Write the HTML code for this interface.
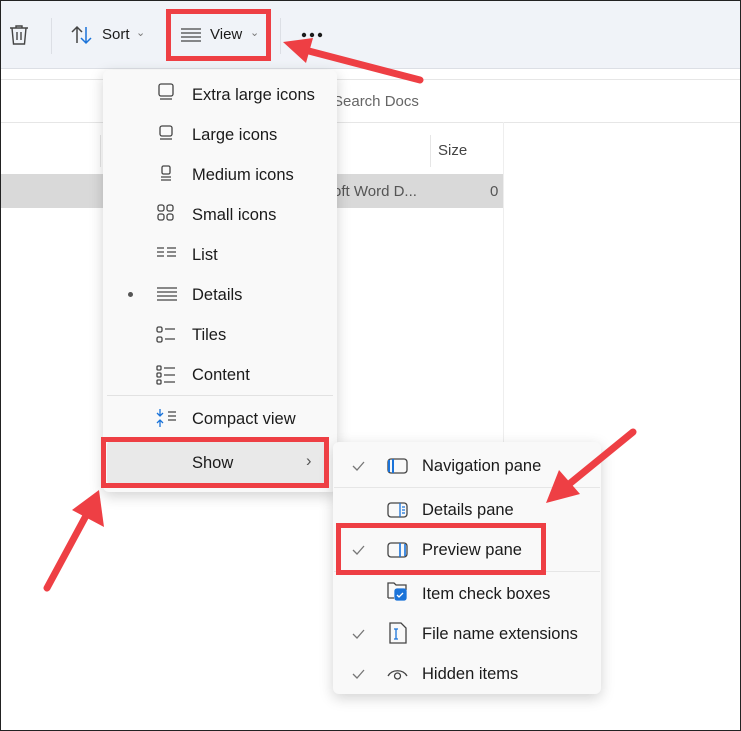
<!DOCTYPE html>
<html><head><style>
body{margin:0;width:741px;height:731px;overflow:hidden;font-family:"Liberation Sans",sans-serif;background:#fff;position:relative}
.abs{position:absolute}
.t{position:absolute;font-size:16.5px;color:#1b1b1b;white-space:nowrap}
</style></head><body>
<div class="abs" style="left:0;top:0;width:741px;height:68px;background:#f0f3f8;border-bottom:1px solid #dcdfe5"></div>
<div class="abs" style="left:0;top:79px;width:741px;height:1px;background:#e6e6e6"></div>
<div class="abs" style="left:0;top:122px;width:741px;height:1px;background:#e6e6e6"></div>
<div class="abs" style="left:51px;top:18px;width:1px;height:36px;background:#dcdfe5"></div>
<div class="abs" style="left:280px;top:18px;width:1px;height:36px;background:#dcdfe5"></div>
<svg class="abs" style="left:8px;top:24px" width="22" height="22" viewBox="0 0 22 22" fill="none" stroke="#444" stroke-width="1.4"><path d="M2 4h18M8 4V2h6v2M4 4l1.5 16h11L18 4M9 8v8M13 8v8"/></svg>
<svg class="abs" style="left:70px;top:25px" width="24" height="20" viewBox="0 0 24 20" fill="none" stroke-width="1.5"><path d="M7 18V2M2 7l5-5 5 5" stroke="#444"/><path d="M16 2v16M11 13l5 5 5-5" stroke="#1a73d9"/></svg>
<div class="t" style="left:102px;top:26px;font-size:15px">Sort</div>
<div class="t" style="left:136px;top:26px;font-size:11px;color:#777">⌄</div>
<svg class="abs" style="left:180px;top:28px" width="22" height="14" stroke="#444" stroke-width="1.2"><path d="M1 1h20M1 5h20M1 9h20M1 13h20"/></svg>
<div class="t" style="left:210px;top:26px;font-size:15px">View</div>
<div class="t" style="left:250px;top:26px;font-size:11px;color:#777">⌄</div>
<div class="t" style="left:333px;top:93px;font-size:15px;color:#666">Search Docs</div>
<div class="abs" style="left:430px;top:135px;width:1px;height:32px;background:#e6e6e6"></div>
<div class="abs" style="left:100px;top:135px;width:1px;height:32px;background:#e6e6e6"></div>
<div class="t" style="left:438px;top:142px;font-size:15px;color:#444">Size</div>
<div class="abs" style="left:0;top:174px;width:503px;height:34px;background:#d9d9d9"></div>
<div class="t" style="left:333px;top:183px;font-size:15px;color:#555">oft Word D...</div>
<div class="t" style="left:490px;top:183px;font-size:15px;color:#555">0</div>
<div class="abs" style="left:503px;top:122px;width:1px;height:330px;background:#eee"></div>

<div class="abs" style="left:103px;top:70px;width:234px;height:422px;background:#f9f9f9;border-radius:6px;box-shadow:0 4px 14px rgba(0,0,0,.18)"></div>
<div class="abs" style="left:107px;top:395px;width:226px;height:1px;background:#e2e2e2"></div>
<div class="abs" style="left:107px;top:441px;width:220px;height:43px;background:#e9e9e9;border-radius:4px"></div>
<svg class="abs" style="left:155px;top:82px" width="24" height="350" fill="none" stroke="#444" stroke-width="1.3">
<rect x="4" y="2" width="14" height="12" rx="2"/><path d="M5 17h12"/>
<rect x="5" y="44" width="12" height="10" rx="2"/><path d="M5 57h12"/>
<rect x="7" y="84" width="8" height="8" rx="1.5"/><path d="M6 95h10M6 98h10"/>
<rect x="3" y="123" width="6" height="6" rx="2"/><rect x="12" y="123" width="6" height="6" rx="2"/><rect x="3" y="132" width="6" height="6" rx="2"/><rect x="12" y="132" width="6" height="6" rx="2"/>
<path d="M2 166h7M2 170h7M2 174h7M12 166h9M12 170h9M12 174h9"/>
<path d="M2 206h20M2 210h20M2 214h20M2 218h20"/>
<rect x="2" y="245" width="5" height="5" rx="1.5"/><rect x="2" y="255" width="5" height="5" rx="1.5"/><path d="M10 247h10M10 257h10"/>
<rect x="2" y="284" width="4" height="4" rx="1"/><rect x="2" y="291" width="4" height="4" rx="1"/><rect x="2" y="298" width="4" height="4" rx="1"/><path d="M9 286h11M9 293h11M9 300h11"/>
<path d="M13 330h8M13 334h8M13 338h8" /><path d="M5 327v6M2 331l3 3 3-3M5 345v-6M2 341l3-3 3 3" stroke="#1a73d9"/>
</svg>
<div class="t" style="left:192px;top:86px">Extra large icons</div>
<div class="t" style="left:192px;top:126px">Large icons</div>
<div class="t" style="left:192px;top:166px">Medium icons</div>
<div class="t" style="left:192px;top:206px">Small icons</div>
<div class="t" style="left:192px;top:246px">List</div>
<div class="abs" style="left:128px;top:292px;width:5px;height:5px;border-radius:50%;background:#555"></div>
<div class="t" style="left:192px;top:286px">Details</div>
<div class="t" style="left:192px;top:326px">Tiles</div>
<div class="t" style="left:192px;top:366px">Content</div>
<div class="t" style="left:192px;top:410px">Compact view</div>
<div class="t" style="left:192px;top:454px">Show</div>
<div class="t" style="left:306px;top:452px;color:#555">›</div>

<div class="abs" style="left:333px;top:442px;width:268px;height:252px;background:#f9f9f9;border-radius:6px;box-shadow:0 4px 14px rgba(0,0,0,.18)"></div>
<div class="abs" style="left:334px;top:487px;width:266px;height:1px;background:#e6e6e6"></div>
<div class="abs" style="left:334px;top:571px;width:266px;height:1px;background:#e6e6e6"></div>
<svg class="abs" style="left:350px;top:455px" width="60" height="230" fill="none" stroke-width="1.3">
<path d="M3 11l4 4 7-8M3 95l4 4 7-8M3 179l4 4 7-8M3 219l4 4 7-8" stroke="#777"/>
<rect x="38" y="4" width="19" height="14" rx="3" stroke="#444"/><path d="M43 4v14M39 5v12" stroke="#1a73d9" stroke-width="2"/>
<rect x="38" y="48" width="19" height="14" rx="3" stroke="#444"/><path d="M50 48v14M52 52h3M52 55h3M52 58h3" stroke="#1a73d9"/>
<rect x="38" y="88" width="19" height="14" rx="3" stroke="#444"/><path d="M50 88v14M55 89v12" stroke="#1a73d9" stroke-width="1.6"/>
<path d="M38 143v-15h6l2 2h10v5M38 143h6" stroke="#444"/><rect x="45" y="134" width="11" height="11" rx="2" fill="#1a73d9" stroke="#1a73d9"/><path d="M47 140l2 2 4-4" stroke="#fff"/>
<path d="M40 168h11l5 5v15H40z" stroke="#444"/><path d="M46 174v10M44 174h4M44 184h4" stroke="#1a73d9"/>
<path d="M38 221c4-7 15-7 19 0" stroke="#444"/><circle cx="47.5" cy="221" r="3" stroke="#444"/>
</svg>
<div class="t" style="left:422px;top:457px">Navigation pane</div>
<div class="t" style="left:422px;top:501px">Details pane</div>
<div class="t" style="left:422px;top:541px">Preview pane</div>
<div class="t" style="left:422px;top:585px">Item check boxes</div>
<div class="t" style="left:422px;top:625px">File name extensions</div>
<div class="t" style="left:422px;top:665px">Hidden items</div>

<div class="abs" style="left:166px;top:9px;width:95px;height:42px;border:5px solid #ee3f44"></div>
<div class="abs" style="left:101px;top:437px;width:218px;height:41px;border:5px solid #ee3f44"></div>
<div class="abs" style="left:336px;top:523px;width:200px;height:42px;border:5px solid #ee3f44"></div>
<svg class="abs" style="left:0;top:0" width="741" height="731">
<g stroke="#ee3f44" stroke-width="7" stroke-linecap="round" fill="#ee3f44">
<line x1="420" y1="80" x2="305" y2="50"/>
<line x1="633" y1="432" x2="568" y2="485"/>
<line x1="47" y1="588" x2="88" y2="512"/>
</g>
<g fill="#ee3f44">
<polygon points="283,42 313,38 306,63"/>
<polygon points="546,503 559,470 580,494"/>
<polygon points="99,490 104,527 72,510"/>
</g>
<g fill="#1b1b1b"><circle cx="304" cy="35" r="2.2"/><circle cx="312" cy="35" r="2.2"/><circle cx="320" cy="35" r="2.2"/></g>
</svg>
<div class="abs" style="left:0;top:0;width:739px;height:729px;border:1px solid #222"></div>
</body></html>
